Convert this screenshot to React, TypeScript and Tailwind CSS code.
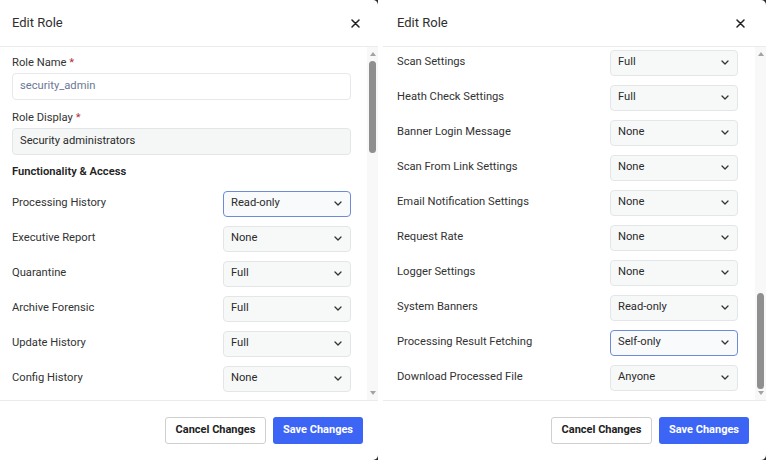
import React from "react";

type Perm = { label: string; value: string; focused?: boolean };

const leftPerms: Perm[] = [
  { label: "Processing History", value: "Read-only", focused: true },
  { label: "Executive Report", value: "None" },
  { label: "Quarantine", value: "Full" },
  { label: "Archive Forensic", value: "Full" },
  { label: "Update History", value: "Full" },
  { label: "Config History", value: "None" },
];

const rightPerms: Perm[] = [
  { label: "Scan Settings", value: "Full" },
  { label: "Heath Check Settings", value: "Full" },
  { label: "Banner Login Message", value: "None" },
  { label: "Scan From Link Settings", value: "None" },
  { label: "Email Notification Settings", value: "None" },
  { label: "Request Rate", value: "None" },
  { label: "Logger Settings", value: "None" },
  { label: "System Banners", value: "Read-only" },
  { label: "Processing Result Fetching", value: "Self-only", focused: true },
  { label: "Download Processed File", value: "Anyone" },
];

function Chevron() {
  return (
    <svg width="8" height="5" viewBox="0 0 8 5" fill="none">
      <path d="M1 1 4 4 7 1" stroke="#333" strokeWidth="1.3" strokeLinecap="round" strokeLinejoin="round" />
    </svg>
  );
}

function Select({ value, focused }: { value: string; focused?: boolean }) {
  return (
    <div
      className={`flex h-[26px] w-[128px] items-center justify-between rounded-[4px] border pl-[7px] pr-[8px] text-[11.2px] text-[#2b2b2b] ${
        focused ? "border-[#6f8bd8] bg-[#f8fafc]" : "border-[#e3e6e8] bg-[#f7f9f9]"
      }`}
    >
      <span>{value}</span>
      <Chevron />
    </div>
  );
}

function PermRow({ p }: { p: Perm }) {
  return (
    <div className="flex h-[35px] items-center justify-between">
      <span className="text-[11.2px] text-[#333]">{p.label}</span>
      <Select value={p.value} focused={p.focused} />
    </div>
  );
}

function Scrollbar({ thumbTop, thumbHeight }: { thumbTop: number; thumbHeight: number }) {
  return (
    <div className="flex w-[11px] shrink-0 flex-col items-center bg-[#f8f8f8]">
      <div className="mt-[5px] h-0 w-0 border-x-[3.5px] border-b-[4px] border-x-transparent border-b-[#a3a3a3]" />
      <div className="flex w-full flex-1 flex-col items-center">
        <div style={{ height: thumbTop }} />
        <div className="w-[7px] rounded-full bg-[#8f8f8f]" style={{ height: thumbHeight }} />
      </div>
      <div className="mb-[5px] h-0 w-0 border-x-[3.5px] border-t-[4px] border-x-transparent border-t-[#a3a3a3]" />
    </div>
  );
}

function Footer({ padRight }: { padRight: string }) {
  return (
    <div className={`flex flex-1 items-start justify-end gap-[7px] border-t border-[#ebebeb] pt-[16px] ${padRight}`}>
      <button className="h-[27px] w-[101px] rounded-[3px] border border-[#cfcfcf] bg-white text-[11px] font-bold text-[#222]">
        Cancel Changes
      </button>
      <button className="h-[27px] w-[90px] rounded-[3px] bg-[#3d65f5] text-[11px] font-bold text-white">
        Save Changes
      </button>
    </div>
  );
}

function Header({ padLeft, padRight }: { padLeft: string; padRight: string }) {
  return (
    <div className={`flex h-[47px] shrink-0 items-center justify-between border-b border-[#ebebeb] ${padLeft} ${padRight}`}>
      <span className="text-[13px] text-[#2f2f2f]">Edit Role</span>
      <svg width="9" height="9" viewBox="0 0 9 9">
        <path d="M1 1 8 8M8 1 1 8" stroke="#222" strokeWidth="1.5" strokeLinecap="round" />
      </svg>
    </div>
  );
}

function LeftModal() {
  return (
    <div className="h-[460px] w-[378px] shrink-0 bg-[#2a2a2a]">
      <div className="flex h-full flex-col rounded-r-[5px] bg-white">
        <Header padLeft="pl-[12px]" padRight="pr-[18px]" />
        <div className="flex h-[353px] shrink-0">
          <div className="flex flex-1 flex-col pl-[12px] pr-[16px] pt-[9px]">
            <div className="text-[11.2px] leading-[14px] text-[#333]">
              Role Name <span className="text-[#b0303a]">*</span>
            </div>
            <div className="mt-[3px] flex h-[27px] items-center rounded-[4px] border border-[#e6e8ea] bg-white pl-[7px] text-[11.2px] text-[#6b7896]">
              security_admin
            </div>
            <div className="mt-[11px] text-[11.2px] leading-[14px] text-[#333]">
              Role Display <span className="text-[#b0303a]">*</span>
            </div>
            <div className="mt-[3px] flex h-[27px] items-center rounded-[4px] border border-[#e3e6e8] bg-[#f5f7f7] pl-[7px] text-[11.2px] text-[#2b2b2b]">
              Security administrators
            </div>
            <div className="mt-[10px] text-[11.2px] font-semibold leading-[14px] text-[#222]">
              Functionality &amp; Access
            </div>
            <div className="mt-[7px] flex flex-col">
              {leftPerms.map((p) => (
                <PermRow key={p.label} p={p} />
              ))}
            </div>
          </div>
          <Scrollbar thumbTop={5} thumbHeight={92} />
        </div>
        <Footer padRight="pr-[15px]" />
      </div>
    </div>
  );
}

function RightModal() {
  return (
    <div className="h-[460px] w-[383px] shrink-0 bg-[#2a2a2a]">
      <div className="flex h-full flex-col rounded-r-[5px] bg-white">
        <Header padLeft="pl-[14px]" padRight="pr-[21px]" />
        <div className="flex h-[353px] shrink-0 overflow-hidden">
          {/* list is scrolled down a little, so the first row sits tight under the header */}
          <div className="-mt-[2px] flex flex-1 flex-col pl-[14px] pr-[17px]">
            {rightPerms.map((p) => (
              <PermRow key={p.label} p={p} />
            ))}
          </div>
          <Scrollbar thumbTop={237} thumbHeight={96} />
        </div>
        <Footer padRight="pr-[17px]" />
      </div>
    </div>
  );
}

export default function App() {
  return (
    <div className="flex h-[460px] w-[766px] gap-[5px] overflow-hidden bg-white font-['Roboto',sans-serif]">
      <LeftModal />
      <RightModal />
    </div>
  );
}
